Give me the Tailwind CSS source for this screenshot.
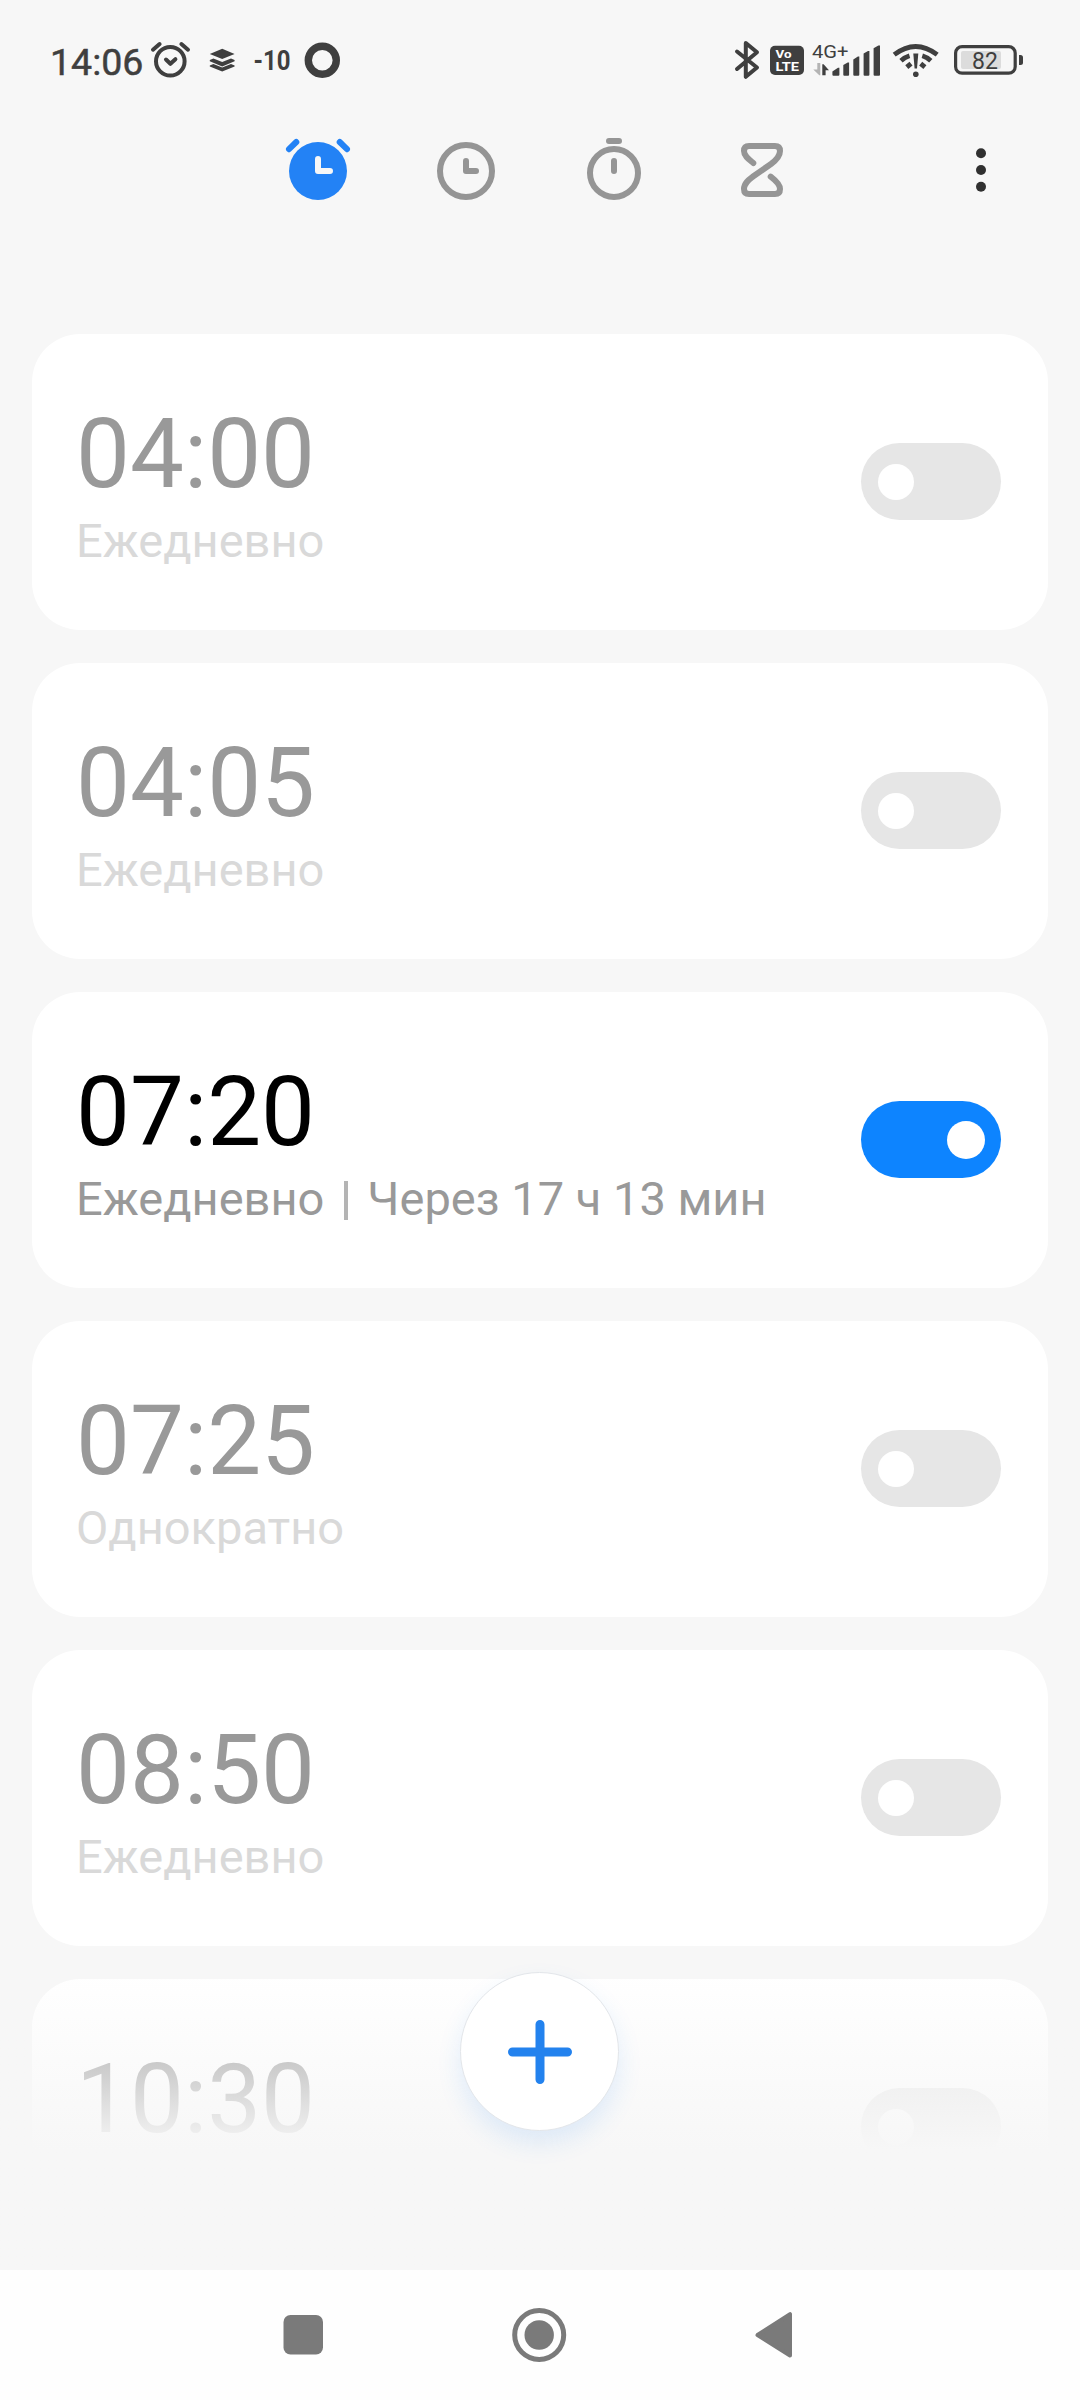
<!DOCTYPE html>
<html lang="ru">
<head>
<meta charset="utf-8">
<title>Будильник</title>
<script src="https://cdn.jsdelivr.net/npm/@tailwindcss/browser@4"></script>
</head>
<body class="bg-[#f7f7f7] font-['Roboto',sans-serif]">
<div class="relative flex h-[2400px] w-[1080px] flex-col overflow-hidden bg-[#f7f7f7]">

  <!-- Status bar -->
  <header class="flex h-[120px] shrink-0 items-center justify-between pl-[50px] pr-[56px] text-[#3f3f3f]">
    <div class="flex h-full items-center">
      <span class="w-[100px] pt-[4px] text-[37.5px] leading-[44px] [-webkit-text-stroke:0.5px_#3f3f3f]">14:06</span>
      <svg class="h-[120px] w-[42px]" viewBox="150 0 42 120" fill="none" stroke="#3f3f3f" stroke-width="4" stroke-linecap="round" stroke-linejoin="round">
        <circle cx="170.3" cy="61.3" r="14.3"/><path d="M166 59.5l4.4 4.3 5-4.6M153 49.7l6.6-5.7M181.4 44l6.6 5.7"/>
      </svg>
      <svg class="ml-[16px] h-[120px] w-[28px]" viewBox="208 0 28 120" fill="#3f3f3f">
        <path d="M222.2 48.8l12.4 5.3-12.4 5-12.4-5z"/>
        <path d="M209.8 60l3.6-1.5 8.8 3.5 8.8-3.5 3.6 1.5v1.200l-12.400 5.200-12.400-5.200z"/>
        <path d="M209.800 65.400l3.600-1.500 8.800 3.500 8.800-3.500 3.600 1.500v1l-12.400 5-12.400-5z"/>
      </svg>
      <svg class="ml-[14px] h-[120px] w-[44px]" viewBox="250 0 44 120"><text x="253.5" y="70" fill="#3f3f3f" font-size="27" font-weight="700" textLength="37" lengthAdjust="spacingAndGlyphs">-10</text></svg>
      <svg class="ml-[8px] h-[120px] w-[40px]" viewBox="302 0 40 120"><circle cx="322.3" cy="60.3" r="14" fill="none" stroke="#3f3f3f" stroke-width="7.4"/></svg>
    </div>
    <div class="flex h-full items-center">
      <svg class="h-[120px] w-[30px]" viewBox="734 0 30 120" fill="none" stroke="#3f3f3f" stroke-width="4" stroke-linecap="round" stroke-linejoin="round"><path d="M737 51.5l20 16-11.2 9.3V43l11.2 9.3-20 16.7"/></svg>
      <svg class="h-[120px] w-[44px]" viewBox="764 0 44 120">
        <rect x="770" y="45.8" width="34" height="29.2" rx="5" fill="#3f3f3f"/>
        <g fill="#fff" font-weight="700"><text x="775.5" y="58.4" font-size="11.5" textLength="16" lengthAdjust="spacingAndGlyphs">Vo</text>
        <text x="775.5" y="71.4" font-size="12.5" textLength="23.5" lengthAdjust="spacingAndGlyphs">LTE</text></g>
      </svg>
      <svg class="h-[120px] w-[76px]" viewBox="808 0 76 120" fill="#3f3f3f">
        <text x="812" y="57.6" font-size="18.8" textLength="36.5" lengthAdjust="spacingAndGlyphs">4G+</text>
        <path d="M817.3 63h3v12.2h-1L813.3 69.5h4z" fill="#b4b4b4"/>
        <path d="M822.3 64.3h1.3l5.4 6h-3.4v5h-3.3z"/>
        <path d="M832.4 71.5l5.6-3.8h1.4v7q0 1-1 1h-5q-1 0-1-1z"/>
        <path d="M843.3 65l4.4-2.6h1.4v12.3q0 1-1 1h-3.8q-1 0-1-1z"/>
        <path d="M853.3 59.4l4.6-2.8h1.4v18.1q0 1-1 1h-4q-1 0-1-1z"/>
        <path d="M863.6 53.6l4.4-2.6h1.4v23.7q0 1-1 1h-3.8q-1 0-1-1z"/>
        <path d="M873.6 48.2l4.8-2.8h1.6v29.3q0 1-1 1h-4.4q-1 0-1-1z"/>
      </svg>
      <svg class="h-[120px] w-[60px]" viewBox="884 0 60 120" fill="none" stroke="#3f3f3f" stroke-width="4.8">
        <path d="M894.2 54.7q21.5-16.4 43 0"/>
        <path d="M901 60.7q4-3.7 8.5-5M922.3 55.7q4.5 1.3 8.5 5"/>
        <path d="M906.8 67.2l4.2-3.5M920.7 63.7l4.2 3.5"/>
        <path d="M913.3 53.5h5l-1.3 15h-2.4z" fill="#3f3f3f" stroke="none"/>
        <circle cx="915.8" cy="74.3" r="2.8" fill="#3f3f3f" stroke="none"/>
      </svg>
      <svg class="h-[120px] w-[80px]" viewBox="944 0 80 120">
        <rect x="961" y="51" width="40" height="18" rx="2" fill="#dcdcdc"/>
        <rect x="955.6" y="46.6" width="59.6" height="26.6" rx="6.5" fill="none" stroke="#3f3f3f" stroke-width="3.2"/>
        <path d="M1019 55h1.5q2.5 0 2.5 2.5v5q0 2.5-2.5 2.5h-1.5z" fill="#3f3f3f"/>
        <text x="972" y="68.9" font-size="23" fill="#3f3f3f">82</text>
      </svg>
    </div>
  </header>

  <!-- Tabs -->
  <nav class="flex h-[100px] shrink-0 items-start pl-[278px]">
    <svg class="h-[100px] w-[80px]" viewBox="278 120 80 100" fill="none" stroke-linecap="round" stroke-linejoin="round">
      <circle cx="318" cy="171" r="29" fill="#2382f5"/>
      <path d="M289 149.2l7.3-7.2M339.7 142l7.3 7.2" stroke="#2382f5" stroke-width="6"/>
      <path d="M318 159v12h12" stroke="#f7f7f7" stroke-width="6"/>
    </svg>
    <svg class="ml-[68px] h-[100px] w-[80px]" viewBox="426 120 80 100" fill="none" stroke="#959595" stroke-width="6" stroke-linecap="round" stroke-linejoin="round">
      <circle cx="466" cy="171" r="26"/><path d="M466 161v10h10"/>
    </svg>
    <svg class="ml-[68px] h-[100px] w-[80px]" viewBox="574 120 80 100" fill="none" stroke="#959595" stroke-width="6" stroke-linecap="round">
      <circle cx="614" cy="173" r="24"/><path d="M609 141h10M614 161v10"/>
    </svg>
    <svg class="ml-[68px] h-[100px] w-[80px]" viewBox="722 120 80 100" fill="none" stroke="#959595" stroke-width="6" stroke-linecap="round" stroke-linejoin="round">
      <path d="M753.3 163C749 159.5 744 156 744 151Q744 146 749 146H775Q780 146 780 151C780 157 775 161 771 164L753 176.5C749 179.5 744 183 744 189Q744 194 749 194H775Q780 194 780 189C780 184 775 180 770.7 176.7"/>
    </svg>
    <svg class="ml-[159px] h-[100px] w-[40px]" viewBox="961 120 40 100" fill="#303030"><circle cx="981" cy="153.3" r="5"/><circle cx="981" cy="170" r="5"/><circle cx="981" cy="186.8" r="5"/></svg>
  </nav>

  <!-- Alarm list -->
  <main class="relative mt-[114px] flex h-[1936px] shrink-0 flex-col gap-[33px] overflow-hidden px-8">
    <section class="flex h-[296px] shrink-0 items-start justify-between rounded-[48px] bg-white pt-[65px] pr-[47px] pl-[44px]">
      <div><div class="text-[96px] leading-[110px] text-[#999]">04:00</div><div class="mt-[5px] text-[47px] leading-[54px] text-[#d9d9d9]">Ежедневно</div></div>
      <div class="mt-[44px] flex h-[77px] w-[140px] items-center rounded-full bg-[#e6e6e6] pl-[17px]"><div class="size-[36px] rounded-full bg-white"></div></div>
    </section>
    <section class="flex h-[296px] shrink-0 items-start justify-between rounded-[48px] bg-white pt-[65px] pr-[47px] pl-[44px]">
      <div><div class="text-[96px] leading-[110px] text-[#999]">04:05</div><div class="mt-[5px] text-[47px] leading-[54px] text-[#d9d9d9]">Ежедневно</div></div>
      <div class="mt-[44px] flex h-[77px] w-[140px] items-center rounded-full bg-[#e6e6e6] pl-[17px]"><div class="size-[36px] rounded-full bg-white"></div></div>
    </section>
    <section class="flex h-[296px] shrink-0 items-start justify-between rounded-[48px] bg-white pt-[65px] pr-[47px] pl-[44px]">
      <div><div class="text-[96px] leading-[110px] text-black">07:20</div>
        <div class="mt-[5px] flex items-center text-[47px] leading-[54px] text-[#999]"><span>Ежедневно</span><span class="mt-[2px] mr-[19px] ml-[20px] h-[39px] w-[4px] bg-[#b4b4b4]"></span><span>Через 17 ч 13 мин</span></div></div>
      <div class="mt-[44px] flex h-[77px] w-[140px] items-center justify-end rounded-full bg-[#0d84ff] pr-[16px]"><div class="size-[38px] rounded-full bg-white"></div></div>
    </section>
    <section class="flex h-[296px] shrink-0 items-start justify-between rounded-[48px] bg-white pt-[65px] pr-[47px] pl-[44px]">
      <div><div class="text-[96px] leading-[110px] text-[#999]">07:25</div><div class="mt-[5px] text-[47px] leading-[54px] text-[#d9d9d9]">Однократно</div></div>
      <div class="mt-[44px] flex h-[77px] w-[140px] items-center rounded-full bg-[#e6e6e6] pl-[17px]"><div class="size-[36px] rounded-full bg-white"></div></div>
    </section>
    <section class="flex h-[296px] shrink-0 items-start justify-between rounded-[48px] bg-white pt-[65px] pr-[47px] pl-[44px]">
      <div><div class="text-[96px] leading-[110px] text-[#999]">08:50</div><div class="mt-[5px] text-[47px] leading-[54px] text-[#d9d9d9]">Ежедневно</div></div>
      <div class="mt-[44px] flex h-[77px] w-[140px] items-center rounded-full bg-[#e6e6e6] pl-[17px]"><div class="size-[36px] rounded-full bg-white"></div></div>
    </section>
    <section class="flex h-[296px] shrink-0 items-start justify-between rounded-[48px] bg-white pt-[65px] pr-[47px] pl-[44px]">
      <div class="text-[96px] leading-[110px] text-[#999]">10:30</div>
      <div class="mt-[44px] flex h-[77px] w-[140px] items-center rounded-full bg-[#e6e6e6] pl-[17px]"><div class="size-[36px] rounded-full bg-white"></div></div>
    </section>

    <div class="absolute inset-x-0 bottom-0 h-[300px] bg-linear-to-b from-[#f7f7f7]/0 to-[#f7f7f7] to-[180px]"></div>
    <button class="absolute bottom-[139px] left-[460px] flex size-[159px] items-center justify-center rounded-full border border-[#e3e6ea] bg-white shadow-[0_12px_24px_rgba(35,130,245,0.12)]">
      <svg class="size-[64px]" viewBox="0 0 64 64" stroke="#2382ee" stroke-width="9" stroke-linecap="round"><path d="M32 4.5v55M4.5 32h55"/></svg>
    </button>
  </main>

  <!-- System navigation -->
  <footer class="flex h-[130px] shrink-0 items-center bg-[#fefefe] pl-[273px]">
    <svg class="h-[130px] w-[60px]" viewBox="273 2270 60 130"><rect x="283.5" y="2315" width="39.5" height="39.5" rx="7" fill="#7a7a7a"/></svg>
    <svg class="ml-[176px] h-[130px] w-[60px]" viewBox="509 2270 60 130"><circle cx="539.2" cy="2335" r="24.5" fill="none" stroke="#7a7a7a" stroke-width="5"/><circle cx="539.2" cy="2335" r="14.7" fill="#7a7a7a"/></svg>
    <svg class="ml-[176px] h-[130px] w-[60px]" viewBox="745 2270 60 130"><path d="M757.5 2335L790 2314.2V2355.6z" fill="#7a7a7a" stroke="#7a7a7a" stroke-width="4" stroke-linejoin="round"/></svg>
  </footer>
</div>
</body>
</html>
